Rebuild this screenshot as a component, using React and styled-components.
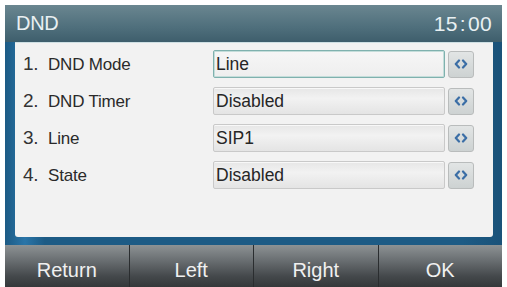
import React from 'react';
import styled, { createGlobalStyle } from 'styled-components';

const GlobalStyle = createGlobalStyle`
  html, body {
    margin: 0;
    padding: 0;
    background: #ffffff;
  }
  body {
    font-family: "Liberation Sans", Arial, sans-serif;
  }
`;

const rows = [
  { num: '1.', label: 'DND Mode', value: 'Line', active: true },
  { num: '2.', label: 'DND Timer', value: 'Disabled' },
  { num: '3.', label: 'Line', value: 'SIP1' },
  { num: '4.', label: 'State', value: 'Disabled' },
];

const keys = ['Return', 'Left', 'Right', 'OK'];

const App = () => {
  return (
    <Page>
      <GlobalStyle />
      <Screen>
        <TitleBar>
          <Title>DND</Title>
          <Clock>15 : 00</Clock>
        </TitleBar>
        <Frame>
          <Panel>
            {rows.map((r) => (
              <Row key={r.num}>
                <Label>
                  <Num>{r.num}</Num>
                  {r.label}
                </Label>
                <Field $active={r.active}>{r.value}</Field>
                <SwitchBtn>
                  <svg width="14" height="10" viewBox="0 0 14 10">
                    <path d="M5 1.5 L1.8 5 L5 8.5" fill="none" stroke="#3b6ea6" strokeWidth="2.2" strokeLinecap="round" strokeLinejoin="round" />
                    <path d="M9 1.5 L12.2 5 L9 8.5" fill="none" stroke="#3b6ea6" strokeWidth="2.2" strokeLinecap="round" strokeLinejoin="round" />
                  </svg>
                </SwitchBtn>
              </Row>
            ))}
          </Panel>
        </Frame>
        <SoftKeys>
          {keys.map((k) => (
            <SoftKey key={k}>{k}</SoftKey>
          ))}
        </SoftKeys>
      </Screen>
    </Page>
  );
};

const Page = styled.div`
  width: 507px;
  height: 287px;
  overflow: hidden;
  padding: 5px 5px 0 5px;
  box-sizing: border-box;
  background: #fff;
`;

const Screen = styled.div`
  width: 497px;
  height: 282px;
  display: flex;
  flex-direction: column;
  background: #1d5b82;
`;

const TitleBar = styled.div`
  height: 37px;
  display: flex;
  align-items: center;
  justify-content: space-between;
  padding: 0 10px 0 11px;
  background: linear-gradient(#6a8690, #4f6f7c 60%, #3e5e6c);
  color: #e9f0f2;
`;

const Title = styled.div`
  font-size: 20px;
  letter-spacing: -0.3px;
`;

const Clock = styled.div`
  font-size: 21px;
  letter-spacing: 0.3px;
  word-spacing: -4px;
`;

const Frame = styled.div`
  height: 203px;
  padding: 0 9px 8px 10px;
  background: linear-gradient(90deg, #1c5a84, #2a75a8 4%, #1d5b85 8%, #1d5b85 92%, #1a5279);
  box-sizing: border-box;
`;

const Panel = styled.div`
  height: 195px;
  background: #f2f2f2;
  border-top: 1px solid #cfe0e4;
  padding: 7px 0 0 8px;
  box-sizing: border-box;
  display: flex;
  flex-direction: column;
  gap: 9px;
  border-radius: 0 0 3px 3px;
`;

const Row = styled.div`
  display: flex;
  align-items: center;
  height: 28px;
`;

const Label = styled.div`
  width: 190px;
  font-size: 17px;
  color: #2a2a2a;
  display: flex;
  align-items: baseline;
  letter-spacing: -0.2px;
`;

const Num = styled.span`
  font-size: 19px;
  color: #333;
  width: 25px;
`;

const Field = styled.div`
  width: 232px;
  height: 28px;
  box-sizing: border-box;
  display: flex;
  align-items: center;
  padding-left: 2px;
  font-size: 17.5px;
  color: #262626;
  border: 1px solid ${(p) => (p.$active ? '#7fb1ae' : '#c9c9c9')};
  box-shadow: ${(p) => (p.$active ? 'inset 0 0 0 1px #c4ddda' : 'inset 0 1px 0 #f8f8f8')};
  background: ${(p) =>
    p.$active ? 'linear-gradient(#f6f6f6, #eeeeee)' : 'linear-gradient(#e6e6e6, #f2f2f2 40%, #e4e4e4)'};
  border-radius: 2px;
`;

const SwitchBtn = styled.div`
  width: 26px;
  height: 27px;
  margin-left: 3px;
  box-sizing: border-box;
  display: flex;
  align-items: center;
  justify-content: center;
  border: 1px solid #b9bcbc;
  border-radius: 3px;
  background: linear-gradient(#e2e5e5, #cdd2d2);
`;

const SoftKeys = styled.div`
  height: 42px;
  display: flex;
  gap: 1px;
  background: #2a2d2f;
`;

const SoftKey = styled.div`
  flex: 1;
  display: flex;
  align-items: center;
  justify-content: center;
  padding-top: 8px;
  font-size: 20px;
  color: #f0f0f0;
  background: linear-gradient(#8d9294, #6b7073 35%, #44484b 75%, #34383a);
`;

export default App;
